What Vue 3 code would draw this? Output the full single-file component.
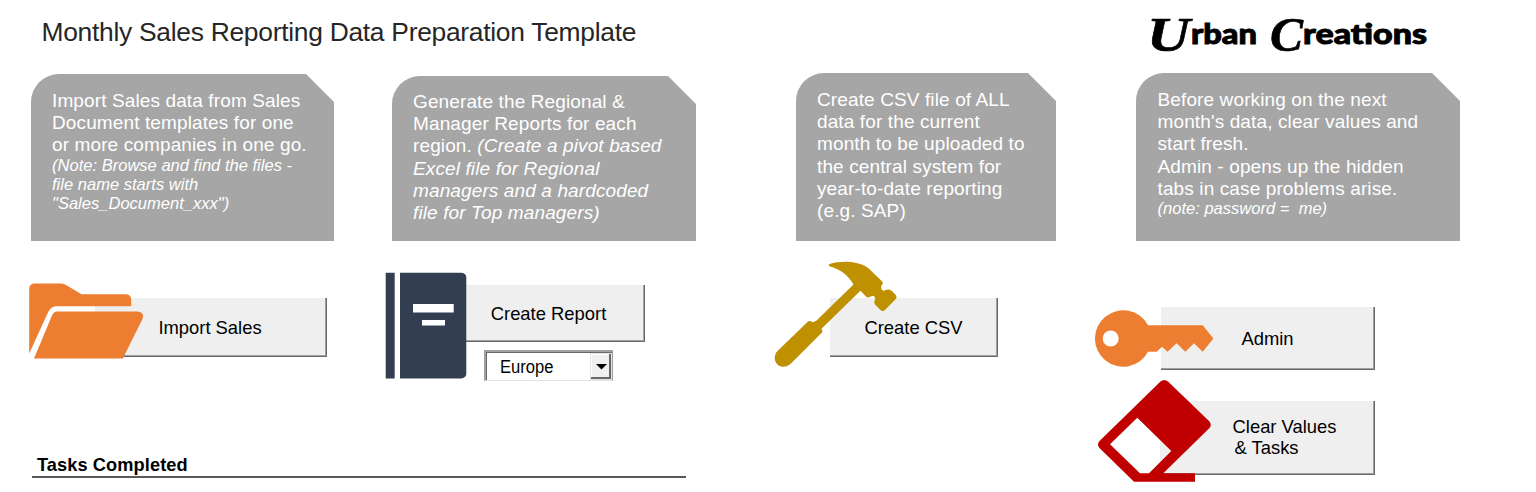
<script setup>
const cards = {
  importSales: {
    lines: ['Import Sales data from Sales', 'Document templates for one', 'or more companies in one go.'],
    notes: ['(Note: Browse and find the files -', 'file name starts with', '"Sales_Document_xxx")']
  },
  csv: ['Create CSV file of ALL', 'data for the current', 'month to be uploaded to', 'the central system for', 'year-to-date reporting', '(e.g. SAP)'],
  admin: ['Before working on the next', "month's data, clear values and", 'start fresh.', 'Admin - opens up the hidden', 'tabs in case problems arise.']
}
</script>

<template>
  <main class="sheet">
    <header class="head">
      <h1>Monthly Sales Reporting Data Preparation Template</h1>
      <svg class="logo" width="294" height="68" viewBox="1141 0 294 68">
        <text class="cap" x="1147" y="50.500" textLength="43" lengthAdjust="spacingAndGlyphs">U</text>
        <text class="low" x="1191" y="43.500" textLength="66" lengthAdjust="spacingAndGlyphs">rban</text>
        <text class="cap" x="1270" y="50.500" textLength="33" lengthAdjust="spacingAndGlyphs">C</text>
        <text class="low" x="1303" y="43.500" textLength="124" lengthAdjust="spacingAndGlyphs">reations</text>
      </svg>
    </header>

    <div class="columns">
      <section class="col c1">
        <div class="card">
          <p v-for="l in cards.importSales.lines" :key="l">{{ l }}</p>
          <p v-for="l in cards.importSales.notes" :key="l" class="note">{{ l }}</p>
        </div>
        <div class="action a-import">
          <button class="btn">Import Sales</button>
          <svg class="icon i-folder" width="118" height="80" viewBox="28 281 118 80">
            <path fill="#fff" d="M29 355L49 306H95V312H56L36 359H29z" />
            <path fill="#ed7d31" d="M29.2 353.5V289Q29.2 283.5 35 283.5H61.5Q64 283.5 66 285L81.5 294.2H125.5Q131.2 294.2 131.2 300V306.3H57Q51 306.3 48.2 312z" />
            <path fill="#ed7d31" d="M34 358.4L52 315.5Q53.8 311.5 57.5 311.5H137.5Q145 312 142.5 319L122.8 358.4z" />
          </svg>
        </div>
      </section>

      <section class="col c2">
        <div class="card">
          <p>Generate the Regional &amp;</p>
          <p>Manager Reports for each</p>
          <p>region. <i>(Create a pivot based</i></p>
          <p><i>Excel file for Regional</i></p>
          <p><i>managers and a hardcoded</i></p>
          <p><i>file for Top managers)</i></p>
        </div>
        <div class="action a-report">
          <button class="btn">Create Report</button>
          <svg class="icon i-book" width="84" height="110" viewBox="384 271 84 110">
            <g fill="#333f50">
              <path d="M385.7 272.8H394.7V378.5H385.7z" />
              <path d="M400 272.8H461.5Q466.3 273.500 466.3 277.5V373.8Q466.3 377.500 461.5 378.5H400z" />
            </g>
            <path fill="#fff" d="M413 304H453.7V312.5H413zM422 320H445V325.5H422z" />
          </svg>
          <div class="combo">
            <span>Europe</span>
            <b class="drop"><svg width="11" height="6" viewBox="0 0 11 6"><path d="M0 0H11L5.5 5.5z" /></svg></b>
          </div>
        </div>
      </section>

      <section class="col c3">
        <div class="card">
          <p v-for="l in cards.csv" :key="l">{{ l }}</p>
        </div>
        <div class="action a-csv">
          <button class="btn">Create CSV</button>
          <svg class="icon i-hammer" width="126" height="110" viewBox="773 260 126 110">
            <path fill="#bf9000" d="M829.5 264C840 261 856 260.500 866.500 267C869 268.500 870 269.800 872 271.700L882 281.300Q883.500 283 882 284.800Q879.500 288 883.500 291Q886 289.500 887 289.800Q889.500 288.800 892 291L895.800 295Q897.500 297.500 895.300 299.500L885 310Q883 311.800 880.500 310L875.500 305Q873.500 303 874.700 300.500Q876 297 873 295.800Q870.500 296.500 869 297.300Q867.500 298 866 296.500L860.400 290.800L821.500 328.800Q823.300 331.500 821.500 333L791 363.500Q785 369 778.500 365.500Q772 359.500 776.500 352L808 321.500Q810 320 812.500 322.300L816 321L853.500 284.500C848 275 840 269 829.500 266.300Q828 265 829.500 264z" />
          </svg>
        </div>
      </section>

      <section class="col c4">
        <div class="card">
          <p v-for="l in cards.admin" :key="l">{{ l }}</p>
          <p class="note">(note: password =&nbsp; me)</p>
        </div>
        <div class="action a-admin">
          <button class="btn">Admin</button>
          <svg class="icon i-key" width="122" height="60" viewBox="1093 309 122 60">
            <circle cx="1110.700" cy="338.500" r="9" fill="#fff" />
            <path fill="#ed7d31" fill-rule="evenodd" d="M1148 325.200H1202.700L1213.400 338.400L1202.700 351.800L1194 343.300L1185.300 351.800L1176.600 343.300L1167.500 351.800L1162 346.700L1156.700 351.800H1148A28.200 28.200 0 1 1 1148 325.200zM1102.700 338.500a8 8 0 1 0 16 0a8 8 0 1 0-16 0z" />
          </svg>
        </div>
        <div class="action a-clear">
          <button class="btn two"><span>Clear Values</span><span>&amp; Tasks</span></button>
          <svg class="icon i-eraser" width="118" height="106" viewBox="1096 378 118 106">
            <path fill="#c00000" fill-rule="evenodd" d="M1160.500 381.500Q1164 378.500 1168 381.500L1209.500 421.500Q1212 424.800 1209.500 428L1163.300 473.200H1195V481.700H1134L1099.500 448Q1096.500 444.500 1099.500 441zM1137.300 417.800L1110 444.300L1140 473.200H1149L1171.300 451z" />
          </svg>
        </div>
      </section>
    </div>

    <footer class="tasks">Tasks Completed</footer>
  </main>
</template>

<style>
html, body { margin: 0; background: #fff; overflow: hidden; }
</style>

<style scoped>
.sheet { width: 1536px; height: 492px; box-sizing: border-box; background: #fff; font-family: "Liberation Sans", Arial, sans-serif; display: flex; flex-direction: column; overflow: hidden; }
.head { height: 73px; flex: none; box-sizing: border-box; padding: 0 101px 0 41.5px; display: flex; justify-content: space-between; align-items: flex-start; }
h1 { margin: 0; padding-top: 16px; font-size: 26.4px; letter-spacing: -.28px; line-height: 32px; font-weight: 400; color: #262626; white-space: nowrap; }
.logo { display: block; overflow: visible; }
.cap { font: italic 900 48px "Liberation Serif", serif; stroke: #000; stroke-width: .6px; }
.low { font: 900 27.5px Lato, sans-serif; stroke: #000; stroke-width: .9px; }
.columns { display: grid; grid-template-columns: 361px 404px 340px 324px; padding-left: 31px; height: 380px; flex: none; }
.card { height: 168px; box-sizing: border-box; padding: 16px 0 0 21px; border-top-left-radius: 28px; background: #a6a6a6; color: #fff; clip-path: polygon(0 0, calc(100% - 28px) 0, 100% 28px, 100% 100%, 0 100%); }
.card p { margin: 0; font-size: 19px; letter-spacing: .12px; line-height: 22.2px; white-space: nowrap; }
.card p.note { font-size: 16.5px; letter-spacing: .02px; line-height: 19px; font-style: italic; }
.card p:not(.note) + .note { margin-top: -1px; }
.c1 .card { width: 303px; height: 167px; margin-top: 1px; }
.c2 .card { width: 304px; height: 165px; margin-top: 3px; padding-top: 15px; }
.c3 .card { width: 260px; }
.c4 .card { width: 324px; padding-left: 21.5px; }
.action { position: relative; display: flex; flex-direction: column; align-items: flex-start; }
.btn { display: flex; align-items: center; justify-content: center; box-sizing: border-box; margin: 0; padding: 0; border: 0; border-radius: 0; background: #efefef; box-shadow: inset -1px -1px #696969, inset -2px -2px #a0a0a0; font: 18.4px "Liberation Sans", Arial, sans-serif; color: #000; white-space: nowrap; }
.a-import .btn { width: 232px; height: 59px; margin: 57px 0 0 64px; padding: 1px 2px 0 0; }
.a-report .btn { width: 185px; height: 57px; margin: 44px 0 0 68px; padding: 1px 8px 0 0; }
.a-csv .btn { width: 168px; height: 59px; margin: 57px 0 0 34px; padding-right: 1px; }
.a-admin .btn { width: 214px; height: 63px; margin: 66px 0 0 25px; padding: 1px 1px 0 0; }
.a-clear .btn { width: 215px; height: 74px; margin: 31px 0 0 24px; }
.a-clear .btn.two { flex-direction: column; line-height: 21px; padding: 0 0 2px 34px; }
.btn.two span:last-child { margin-right: 36px; }
.icon { position: absolute; display: block; }
.i-folder { left: -3px; top: 40px; }
.i-book { left: -8px; top: 30px; }
.i-hammer { left: -23px; top: 19px; }
.i-key { left: -43px; top: 68px; }
.i-eraser { left: -40px; top: 8px; }
.combo { width: 129px; height: 31px; margin: 8px 0 0 92px; box-sizing: border-box; border: 2px solid #a0a0a0; border-bottom: 1px solid #e3e3e3; border-right-width: 1px; box-shadow: inset 1px 1px #696969; display: flex; align-items: center; justify-content: space-between; padding: 1px 0 0 14px; font-size: 18px; background: #fff; }
.combo span { transform: scaleX(.92); transform-origin: left; padding-top: 1px; }
.drop { width: 22px; height: 27px; box-sizing: border-box; background: #f0f0f0; border: 1px solid #e3e3e3; box-shadow: inset -2px -2px #696969, inset 1px 1px #fff; display: flex; align-items: center; justify-content: center; }
.tasks { box-sizing: border-box; width: 654px; height: 25px; margin-left: 32px; padding-left: 5px; border-bottom: 2px solid #595959; font-size: 18.2px; letter-spacing: .1px; line-height: 24px; font-weight: 700; }
</style>
